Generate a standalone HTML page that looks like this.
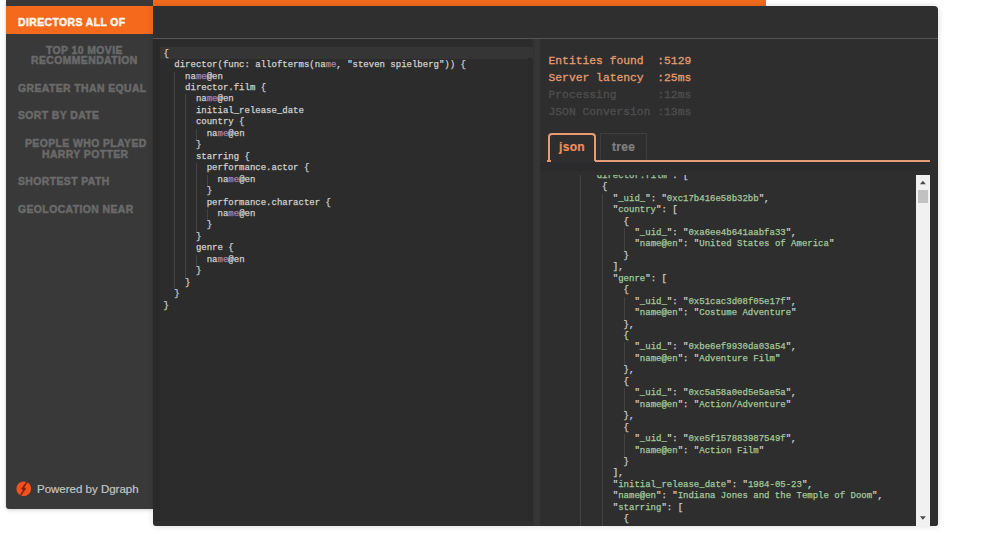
<!DOCTYPE html>
<html><head><meta charset="utf-8">
<style>
*{box-sizing:border-box;margin:0;padding:0}
html,body{width:1000px;height:538px;overflow:hidden;background:#fff}
body{position:relative;font-family:"Liberation Sans",sans-serif}
#side{position:absolute;left:6px;top:0;width:147px;height:509px;background:#393939;border-bottom-left-radius:3px;box-shadow:0 1px 4px rgba(0,0,0,.18)}
.it{position:absolute;left:0;width:147px;font-weight:bold;font-size:10px;letter-spacing:0.4px;color:#6a6a6a;white-space:nowrap;line-height:10.5px}
.it.act{background:#f4691c;color:#fff5ea;top:6px;height:28px}
.it span{position:absolute;transform:scaleX(1.04);transform-origin:0 0;-webkit-text-stroke:0.5px currentColor}
#pow{position:absolute;left:37px;top:483px;font-size:11.5px;color:#c4c4c4;white-space:nowrap;-webkit-text-stroke:0.2px #c4c4c4}
#logo{position:absolute;left:15.5px;top:480.5px;width:15.5px;height:15.5px}
#bar{position:absolute;left:153px;top:0;width:613px;height:6px;background:#f26a1c}
#main{position:absolute;left:153px;top:6px;width:785px;height:520px;background:#2f2f2f;border-top-right-radius:4px;border-bottom-right-radius:3px;border-bottom-left-radius:3px;box-shadow:0 0 6px rgba(0,0,0,.15);overflow:hidden}
#hline{position:absolute;left:0;top:32px;width:785px;height:1px;background:#565656}
#code{position:absolute;left:0;top:33px;width:381px;height:482px;background:#2c2c2c;overflow:hidden}
#gut{position:absolute;left:0;top:0;width:7px;height:482px;background:#292929}
#active{position:absolute;left:7px;top:8px;width:374px;height:11.5px;background:#353535}
.cm{position:absolute;left:10.5px;top:9.7px;font-family:"Liberation Mono",monospace;font-size:9px;color:#d0d0d0;-webkit-text-stroke:0.25px #d0d0d0}
.ln{position:absolute;left:0;height:11.45px;line-height:11.45px;white-space:pre;width:360px}
.ln span{position:absolute;left:0;top:0}
.ln u{position:absolute;top:0;width:1px;height:12px;background:#434343}
.cm i{font-style:normal;color:#ad85b0;-webkit-text-stroke:0.25px #ad85b0}
#div{position:absolute;left:380px;top:33px;width:8px;height:487px;background:linear-gradient(90deg,#303030,#363636 30%,#363636 75%,#303030)}
#csb{position:absolute;left:375px;top:19px;width:5px;height:463px;background:#2a2a2a}
#right{position:absolute;left:387px;top:33px;width:398px;height:487px;background:#2e2e2e}
.st{position:absolute;left:8.5px;font-family:"Liberation Mono",monospace;font-size:11.33px;white-space:pre;line-height:17px;-webkit-text-stroke:0.3px currentColor}
#tabs{position:absolute;left:0;top:0}
.tab{position:absolute;font-weight:bold;font-size:12px;letter-spacing:0.3px;text-align:center;line-height:26px;border-radius:4px 4px 0 0}
#json{position:absolute;left:0;top:135.5px;width:376px;height:352px;overflow:hidden}
.jm{position:absolute;left:8px;top:-3.8px;font-family:"Liberation Mono",monospace;font-size:9px;color:#d0d0d0;-webkit-text-stroke:0.25px #d0d0d0}
.jm b{font-weight:normal;color:#a3c99a;-webkit-text-stroke:0.25px #a3c99a}
.jm s{text-decoration:none;color:#c4c4c4}
#sb{position:absolute;left:376px;top:136px;width:14px;height:351px;background:#f1f1f1}
#thumb{position:absolute;left:1.5px;top:15px;width:10.5px;height:13px;background:#c1c1c1}
</style></head><body>
<div id="side">
  <div class="it act"><span style="left:12px;top:11.5px">DIRECTORS ALL OF</span></div>
  <div class="it" style="top:34px;height:38px"><span style="left:40px;top:11.7px">TOP 10 MOVIE</span><span style="left:24.5px;top:21.8px">RECOMMENDATION</span></div>
  <div class="it" style="top:72px;height:28px"><span style="left:12px;top:11.5px">GREATER THAN EQUAL</span></div>
  <div class="it" style="top:100px;height:28px"><span style="left:12px;top:10.5px">SORT BY DATE</span></div>
  <div class="it" style="top:128px;height:38px"><span style="left:18.5px;top:10.5px">PEOPLE WHO PLAYED</span><span style="left:35.5px;top:21.5px">HARRY POTTER</span></div>
  <div class="it" style="top:166px;height:28px"><span style="left:12px;top:10.5px">SHORTEST PATH</span></div>
  <div class="it" style="top:194px;height:28px"><span style="left:12px;top:10.5px">GEOLOCATION NEAR</span></div>
</div>
<svg id="logo" viewBox="0 0 16 16"><circle cx="8" cy="8" r="7.6" fill="#f4511e"/><path d="M11.2 1.2 L6.2 8.6 L9.6 7.4 L4.8 14.8" fill="none" stroke="#7a240c" stroke-width="1.7" stroke-linejoin="bevel"/></svg>
<div id="pow">Powered by Dgraph</div>
<div id="bar"></div>
<div id="main">
  <div id="hline"></div>
  <div id="code">
    <div id="gut"></div>
    <div id="active"></div><div id="csb"></div>
    <div class="cm">
<div class="ln" style="top:0.00px"><span>{</span></div>
<div class="ln" style="top:11.45px"><span>  director(func: allofterms(na<i>me</i>, &quot;steven spielberg&quot;)) {</span></div>
<div class="ln" style="top:22.90px"><u style="left:10.80px"></u><span>    na<i>me</i>@en</span></div>
<div class="ln" style="top:34.35px"><u style="left:10.80px"></u><span>    director.film {</span></div>
<div class="ln" style="top:45.80px"><u style="left:10.80px"></u><u style="left:21.60px"></u><span>      na<i>me</i>@en</span></div>
<div class="ln" style="top:57.25px"><u style="left:10.80px"></u><u style="left:21.60px"></u><span>      initial_release_date</span></div>
<div class="ln" style="top:68.70px"><u style="left:10.80px"></u><u style="left:21.60px"></u><span>      country {</span></div>
<div class="ln" style="top:80.15px"><u style="left:10.80px"></u><u style="left:21.60px"></u><u style="left:32.40px"></u><span>        na<i>me</i>@en</span></div>
<div class="ln" style="top:91.60px"><u style="left:10.80px"></u><u style="left:21.60px"></u><span>      }</span></div>
<div class="ln" style="top:103.05px"><u style="left:10.80px"></u><u style="left:21.60px"></u><span>      starring {</span></div>
<div class="ln" style="top:114.50px"><u style="left:10.80px"></u><u style="left:21.60px"></u><u style="left:32.40px"></u><span>        performance.actor {</span></div>
<div class="ln" style="top:125.95px"><u style="left:10.80px"></u><u style="left:21.60px"></u><u style="left:32.40px"></u><u style="left:43.20px"></u><span>          na<i>me</i>@en</span></div>
<div class="ln" style="top:137.40px"><u style="left:10.80px"></u><u style="left:21.60px"></u><u style="left:32.40px"></u><span>        }</span></div>
<div class="ln" style="top:148.85px"><u style="left:10.80px"></u><u style="left:21.60px"></u><u style="left:32.40px"></u><span>        performance.character {</span></div>
<div class="ln" style="top:160.30px"><u style="left:10.80px"></u><u style="left:21.60px"></u><u style="left:32.40px"></u><u style="left:43.20px"></u><span>          na<i>me</i>@en</span></div>
<div class="ln" style="top:171.75px"><u style="left:10.80px"></u><u style="left:21.60px"></u><u style="left:32.40px"></u><span>        }</span></div>
<div class="ln" style="top:183.20px"><u style="left:10.80px"></u><u style="left:21.60px"></u><span>      }</span></div>
<div class="ln" style="top:194.65px"><u style="left:10.80px"></u><u style="left:21.60px"></u><span>      genre {</span></div>
<div class="ln" style="top:206.10px"><u style="left:10.80px"></u><u style="left:21.60px"></u><u style="left:32.40px"></u><span>        na<i>me</i>@en</span></div>
<div class="ln" style="top:217.55px"><u style="left:10.80px"></u><u style="left:21.60px"></u><span>      }</span></div>
<div class="ln" style="top:229.00px"><u style="left:10.80px"></u><span>    }</span></div>
<div class="ln" style="top:240.45px"><span>  }</span></div>
<div class="ln" style="top:251.90px"><span>}</span></div>
    </div>
  </div>
  <div id="div"></div>
  <div id="right">
    <div class="st" style="top:13.8px;color:#e59a70">Entities found  :5129</div>
    <div class="st" style="top:30.8px;color:#e59a70">Server latency  :25ms</div>
    <div class="st" style="top:47.8px;color:#4e4e4e">Processing      :12ms</div>
    <div class="st" style="top:64.8px;color:#4e4e4e">JSON Conversion :13ms</div>
    <div class="tab" style="left:8px;top:94px;width:48px;height:28px;border:2px solid #e89a72;border-bottom:none;color:#ec8f5c;line-height:24px;-webkit-text-stroke:0.2px #ec8f5c">json</div>
    <div style="position:absolute;left:0;top:123px;width:390px;height:9px;background:#2b2b2d"></div><div style="position:absolute;left:55px;top:121.2px;width:335px;height:1.7px;background:#e39c76"></div>
    <div style="position:absolute;left:7px;top:121px;width:4px;height:2px;background:#e8956a"></div>
    <div class="tab" style="left:60px;top:94px;width:47px;height:27px;border:1px solid #3e3e3e;border-bottom:none;border-radius:1px;color:#808080;-webkit-text-stroke:0.2px #808080">tree</div>
    <div id="json">
      <div class="jm">
<div class="ln" style="top:0.00px"><u style="left:32.40px"></u><span>        <s>&quot;</s><b>director.film</b><s>&quot;</s>: [</span></div>
<div class="ln" style="top:11.45px"><u style="left:32.40px"></u><span>          {</span></div>
<div class="ln" style="top:22.90px"><u style="left:32.40px"></u><u style="left:54.00px"></u><span>            <s>&quot;</s><b>_uid_</b><s>&quot;</s>: <s>&quot;</s><b>0xc17b416e58b32bb</b><s>&quot;</s>,</span></div>
<div class="ln" style="top:34.35px"><u style="left:32.40px"></u><u style="left:54.00px"></u><span>            <s>&quot;</s><b>country</b><s>&quot;</s>: [</span></div>
<div class="ln" style="top:45.80px"><u style="left:32.40px"></u><u style="left:54.00px"></u><span>              {</span></div>
<div class="ln" style="top:57.25px"><u style="left:32.40px"></u><u style="left:54.00px"></u><u style="left:75.60px"></u><span>                <s>&quot;</s><b>_uid_</b><s>&quot;</s>: <s>&quot;</s><b>0xa6ee4b641aabfa33</b><s>&quot;</s>,</span></div>
<div class="ln" style="top:68.70px"><u style="left:32.40px"></u><u style="left:54.00px"></u><u style="left:75.60px"></u><span>                <s>&quot;</s><b>name@en</b><s>&quot;</s>: <s>&quot;</s><b>United States of America</b><s>&quot;</s></span></div>
<div class="ln" style="top:80.15px"><u style="left:32.40px"></u><u style="left:54.00px"></u><span>              }</span></div>
<div class="ln" style="top:91.60px"><u style="left:32.40px"></u><u style="left:54.00px"></u><span>            ],</span></div>
<div class="ln" style="top:103.05px"><u style="left:32.40px"></u><u style="left:54.00px"></u><span>            <s>&quot;</s><b>genre</b><s>&quot;</s>: [</span></div>
<div class="ln" style="top:114.50px"><u style="left:32.40px"></u><u style="left:54.00px"></u><span>              {</span></div>
<div class="ln" style="top:125.95px"><u style="left:32.40px"></u><u style="left:54.00px"></u><u style="left:75.60px"></u><span>                <s>&quot;</s><b>_uid_</b><s>&quot;</s>: <s>&quot;</s><b>0x51cac3d08f05e17f</b><s>&quot;</s>,</span></div>
<div class="ln" style="top:137.40px"><u style="left:32.40px"></u><u style="left:54.00px"></u><u style="left:75.60px"></u><span>                <s>&quot;</s><b>name@en</b><s>&quot;</s>: <s>&quot;</s><b>Costume Adventure</b><s>&quot;</s></span></div>
<div class="ln" style="top:148.85px"><u style="left:32.40px"></u><u style="left:54.00px"></u><span>              },</span></div>
<div class="ln" style="top:160.30px"><u style="left:32.40px"></u><u style="left:54.00px"></u><span>              {</span></div>
<div class="ln" style="top:171.75px"><u style="left:32.40px"></u><u style="left:54.00px"></u><u style="left:75.60px"></u><span>                <s>&quot;</s><b>_uid_</b><s>&quot;</s>: <s>&quot;</s><b>0xbe6ef9930da03a54</b><s>&quot;</s>,</span></div>
<div class="ln" style="top:183.20px"><u style="left:32.40px"></u><u style="left:54.00px"></u><u style="left:75.60px"></u><span>                <s>&quot;</s><b>name@en</b><s>&quot;</s>: <s>&quot;</s><b>Adventure Film</b><s>&quot;</s></span></div>
<div class="ln" style="top:194.65px"><u style="left:32.40px"></u><u style="left:54.00px"></u><span>              },</span></div>
<div class="ln" style="top:206.10px"><u style="left:32.40px"></u><u style="left:54.00px"></u><span>              {</span></div>
<div class="ln" style="top:217.55px"><u style="left:32.40px"></u><u style="left:54.00px"></u><u style="left:75.60px"></u><span>                <s>&quot;</s><b>_uid_</b><s>&quot;</s>: <s>&quot;</s><b>0xc5a58a0ed5e5ae5a</b><s>&quot;</s>,</span></div>
<div class="ln" style="top:229.00px"><u style="left:32.40px"></u><u style="left:54.00px"></u><u style="left:75.60px"></u><span>                <s>&quot;</s><b>name@en</b><s>&quot;</s>: <s>&quot;</s><b>Action/Adventure</b><s>&quot;</s></span></div>
<div class="ln" style="top:240.45px"><u style="left:32.40px"></u><u style="left:54.00px"></u><span>              },</span></div>
<div class="ln" style="top:251.90px"><u style="left:32.40px"></u><u style="left:54.00px"></u><span>              {</span></div>
<div class="ln" style="top:263.35px"><u style="left:32.40px"></u><u style="left:54.00px"></u><u style="left:75.60px"></u><span>                <s>&quot;</s><b>_uid_</b><s>&quot;</s>: <s>&quot;</s><b>0xe5f157883987549f</b><s>&quot;</s>,</span></div>
<div class="ln" style="top:274.80px"><u style="left:32.40px"></u><u style="left:54.00px"></u><u style="left:75.60px"></u><span>                <s>&quot;</s><b>name@en</b><s>&quot;</s>: <s>&quot;</s><b>Action Film</b><s>&quot;</s></span></div>
<div class="ln" style="top:286.25px"><u style="left:32.40px"></u><u style="left:54.00px"></u><span>              }</span></div>
<div class="ln" style="top:297.70px"><u style="left:32.40px"></u><u style="left:54.00px"></u><span>            ],</span></div>
<div class="ln" style="top:309.15px"><u style="left:32.40px"></u><u style="left:54.00px"></u><span>            <s>&quot;</s><b>initial_release_date</b><s>&quot;</s>: <s>&quot;</s><b>1984-05-23</b><s>&quot;</s>,</span></div>
<div class="ln" style="top:320.60px"><u style="left:32.40px"></u><u style="left:54.00px"></u><span>            <s>&quot;</s><b>name@en</b><s>&quot;</s>: <s>&quot;</s><b>Indiana Jones and the Temple of Doom</b><s>&quot;</s>,</span></div>
<div class="ln" style="top:332.05px"><u style="left:32.40px"></u><u style="left:54.00px"></u><span>            <s>&quot;</s><b>starring</b><s>&quot;</s>: [</span></div>
<div class="ln" style="top:343.50px"><u style="left:32.40px"></u><u style="left:54.00px"></u><span>              {</span></div>
<div class="ln" style="top:354.95px"><u style="left:32.40px"></u><u style="left:54.00px"></u><u style="left:75.60px"></u><span>                <s>&quot;</s><b>_uid_</b><s>&quot;</s>: <s>&quot;</s><b>0x40a2a6c8a1e0b9b</b><s>&quot;</s>,</span></div>
      </div>
    </div>
    <div id="sb"><svg style="position:absolute;left:0;top:0" width="14" height="351" viewBox="0 0 14 351"><path d="M3.9 9.3 L6.9 5.8 L9.9 9.3Z" fill="#4a4a4a"/><path d="M3.9 341.3 L6.9 344.8 L9.9 341.3Z" fill="#4a4a4a"/></svg><div id="thumb"></div></div>
  </div>
</div>
</body></html>
